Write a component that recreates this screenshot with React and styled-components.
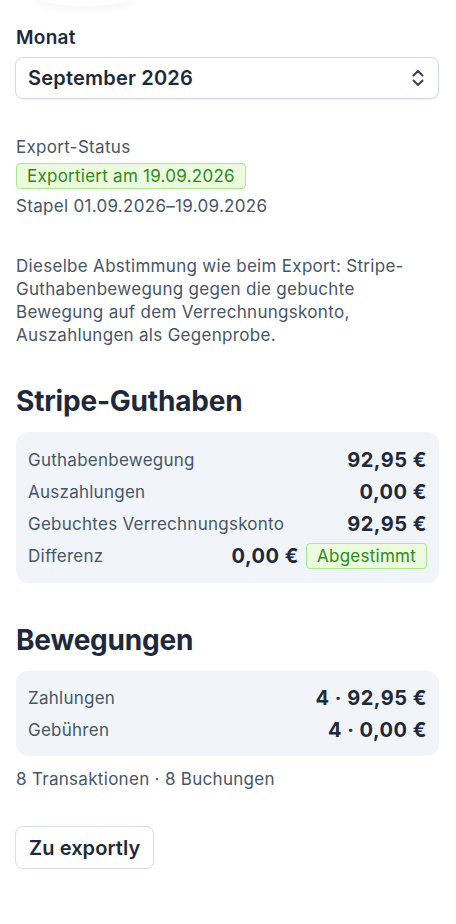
import React from "react";
import styled, { createGlobalStyle } from "styled-components";

const Global = createGlobalStyle`
  html, body { margin: 0; padding: 0; background: #fff; }
  body { font-family: Inter, "Noto Sans", sans-serif; color: #1e293b; -webkit-font-smoothing: antialiased; }
  * { box-sizing: border-box; }
`;

const Page = styled.div`
  position: relative;
  padding: 26px 17px 40px 15px;
  display: flex;
  flex-direction: column;
`;

const TopShadow = styled.div`
  position: absolute;
  left: 35px;
  top: -14px;
  width: 100px;
  height: 20px;
  border-radius: 50%;
  box-shadow: 0 4px 8px rgba(15, 23, 42, 0.04);
  background: #fff;
`;

const Label = styled.div`
  font-size: 19px;
  line-height: 24px;
  font-weight: 600;
  letter-spacing: 0.3px;
  color: #1e293b;
  padding-left: 1px;
`;

const Select = styled.div`
  margin-top: 7px;
  height: 42px;
  border: 1px solid #cfd8e3;
  border-radius: 8px;
  box-shadow: 0 1px 2px rgba(15, 23, 42, 0.06);
  display: flex;
  align-items: center;
  justify-content: space-between;
  padding: 0 12px 0 12px;
  font-size: 20px;
  font-weight: 600;
  letter-spacing: 0.2px;
  color: #1e293b;
`;

const Muted = styled.div`
  font-size: 17px;
  line-height: 22px;
  letter-spacing: 0.3px;
  color: #475569;
  margin-top: ${(p) => p.$mt || 0}px;
  padding-left: 1px;
`;

const Para = styled.p`
  margin: 38px 0 0;
  font-size: 17px;
  line-height: 23px;
  letter-spacing: 0.3px;
  color: #475569;
  padding-left: 1px;
`;

const Badge = styled.span`
  display: inline-flex;
  align-items: center;
  height: 26px;
  padding: 0 10px;
  border: 1px solid #a9e88c;
  background: #ecfbe0;
  color: #2f8a17;
  border-radius: 4px;
  font-size: 17px;
  font-weight: 400;
  letter-spacing: 0.25px;
  white-space: nowrap;
`;

const BadgeWrap = styled.div`
  margin-top: 5px;
  padding-left: 1px;
`;

const Heading = styled.h2`
  margin: ${(p) => p.$mt}px 0 0;
  font-size: 28px;
  line-height: 32px;
  font-weight: 700;
  letter-spacing: -0.2px;
  color: #1e293b;
  padding-left: 1px;
`;

const Card = styled.div`
  margin: 15px 0 0 1px;
  background: #f1f5f9;
  border-radius: 12px;
  padding: ${(p) => p.$pt}px 12px ${(p) => p.$pb}px 12px;
  display: flex;
  flex-direction: column;
`;

const Row = styled.div`
  height: 32px;
  display: flex;
  align-items: center;
  justify-content: space-between;
`;

const RowLabel = styled.span`
  font-size: 17px;
  letter-spacing: 0.25px;
  color: #475569;
`;

const RowValue = styled.span`
  display: flex;
  align-items: center;
  gap: 7px;
  font-size: 20px;
  font-weight: 700;
  letter-spacing: 0.5px;
  color: #1e293b;
`;

const Button = styled.button`
  margin-top: 36px;
  align-self: flex-start;
  height: 43px;
  padding: 0 13px;
  background: #fff;
  border: 1px solid #d3deea;
  border-radius: 8px;
  font-family: inherit;
  font-size: 20px;
  font-weight: 600;
  letter-spacing: 0.1px;
  color: #1e293b;
`;

const Chevrons = () => (
  <svg width="16" height="20" viewBox="0 0 16 20" fill="none" stroke="#334155" strokeWidth="1.9" strokeLinecap="round" strokeLinejoin="round">
    <path d="M3.5 7.5 8 3l4.5 4.5" />
    <path d="M3.5 12.5 8 17l4.5-4.5" />
  </svg>
);

export default function App() {
  return (
    <>
      <Global />
      <Page>
        <TopShadow />
        <Label>Monat</Label>
        <Select>
          <span>September 2026</span>
          <Chevrons />
        </Select>
        <Muted $mt={37}>Export-Status</Muted>
        <BadgeWrap>
          <Badge>Exportiert am 19.09.2026</Badge>
        </BadgeWrap>
        <Muted $mt={6}>Stapel 01.09.2026–19.09.2026</Muted>
        <Para>
          Dieselbe Abstimmung wie beim Export: Stripe-Guthabenbewegung gegen die gebuchte Bewegung auf dem Verrechnungskonto, Auszahlungen als Gegenprobe.
        </Para>
        <Heading $mt={38}>Stripe-Guthaben</Heading>
        <Card $pt={12} $pb={11}>
          <Row>
            <RowLabel>Guthabenbewegung</RowLabel>
            <RowValue>92,95 €</RowValue>
          </Row>
          <Row>
            <RowLabel>Auszahlungen</RowLabel>
            <RowValue>0,00 €</RowValue>
          </Row>
          <Row>
            <RowLabel>Gebuchtes Verrechnungskonto</RowLabel>
            <RowValue>92,95 €</RowValue>
          </Row>
          <Row>
            <RowLabel>Differenz</RowLabel>
            <RowValue>
              0,00 €<Badge>Abgestimmt</Badge>
            </RowValue>
          </Row>
        </Card>
        <Heading $mt={41}>Bewegungen</Heading>
        <Card $pt={11} $pb={10}>
          <Row>
            <RowLabel>Zahlungen</RowLabel>
            <RowValue>4 · 92,95 €</RowValue>
          </Row>
          <Row>
            <RowLabel>Gebühren</RowLabel>
            <RowValue>4 · 0,00 €</RowValue>
          </Row>
        </Card>
        <Muted $mt={12}>8 Transaktionen · 8 Buchungen</Muted>
        <Button>Zu exportly</Button>
      </Page>
    </>
  );
}
